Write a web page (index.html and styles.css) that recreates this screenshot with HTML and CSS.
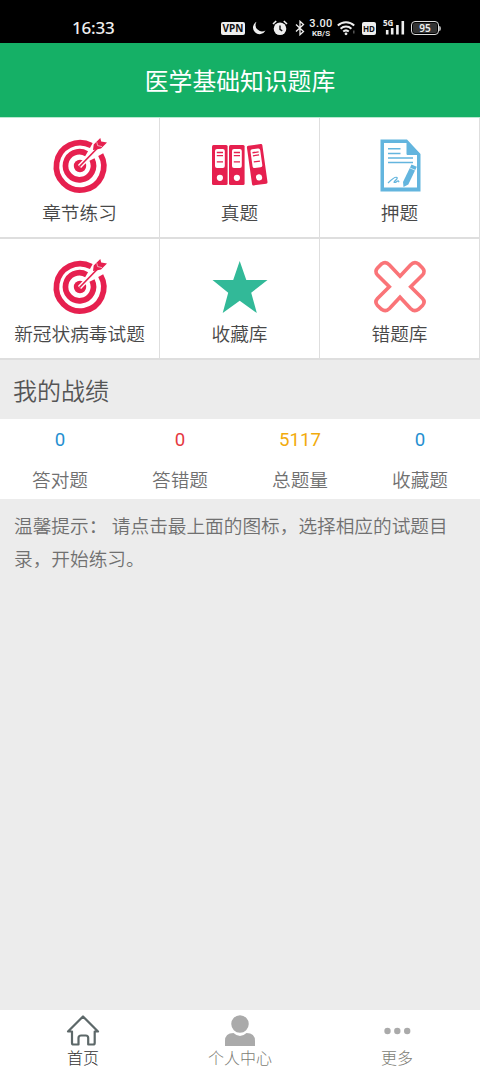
FILE: index.html
```
<!DOCTYPE html>
<html lang="zh-CN">
<head>
<meta charset="utf-8">
<title>医学基础知识题库</title>
<link rel="stylesheet" href="styles.css">
</head>
<body>
<div class="app">
  <div class="status">
    <span class="clock">16:33</span>
    <span class="vpn">VPN</span>
    <svg class="moon" width="14" height="14" viewBox="0 0 14 14"><path d="M4.500.7A6.600 6.600 0 1 0 13.500 9.500 6.500 6.500 0 0 1 4.500.7z" fill="#eee"/></svg>
    <svg class="alarm" width="16" height="16" viewBox="0 0 16 16"><circle cx="8" cy="8.800" r="6.300" fill="#eee"/><path d="M1 4 4.200 1M15 4l-3.200-3" stroke="#eee" stroke-width="1.600"/><path d="M8 5.500v3.800l2.200 1.500" fill="none" stroke="#111" stroke-width="1.400"/></svg>
    <svg class="bt" width="10" height="16" viewBox="0 0 10 16"><path d="M1 4.500 8.500 11.500 5 14.700V1.300L8.500 4.500 1 11.500" fill="none" stroke="#eee" stroke-width="1.300"/></svg>
    <span class="speed"><b>3.00</b><i>KB/S</i></span>
    <svg class="wifi" width="19" height="16" viewBox="0 0 19 16"><g fill="none" stroke="#eee" stroke-width="2"><path d="M.8 5.500a12 12 0 0 1 16.400 0M3.600 8.700a8 8 0 0 1 10.800 0M6.200 11.600a4.200 4.200 0 0 1 5.600 0"/></g><circle cx="9" cy="13.800" r="1.400" fill="#eee"/><path d="M16.800 10.500v3" stroke="#555" stroke-width="1.500"/></svg>
    <span class="hd">HD</span>
    <span class="signal"><i>5G</i><svg width="21" height="16" viewBox="0 0 21 16"><path d="M3.200 14.500V10M8.200 14.500V8M13.400 14.500V5M18.800 14.500V1" stroke="#eee" stroke-width="2.600"/></svg></span>
    <span class="battery"><b>95</b></span><span class="tip"></span>
  </div>
  <header class="title">医学基础知识题库</header>
  <main class="grid">
    <a class="cell">
      <svg class="icon" viewBox="50 136 60 60"><use href="#target"/></svg>
      <span>章节练习</span>
    </a>
    <a class="cell">
      <svg class="icon" viewBox="210 136 60 60">
        <defs><g id="binder"><rect width="15.600" height="40" rx="1.500" fill="#e6204f"/><rect x="3" y="4" width="9.800" height="19" rx="2" fill="#fff"/><path d="M4.800 7.500h6.200M4.800 10.600h6.200M4.800 16.800h6.200" stroke="#e6204f" stroke-width="1.300"/><circle cx="7.900" cy="32.800" r="3.100" fill="#fff"/></g></defs>
        <use href="#binder" x="212" y="145"/><use href="#binder" x="229" y="145"/><use href="#binder" transform="translate(246.700 146) rotate(-8)"/>
      </svg>
      <span>真题</span>
    </a>
    <a class="cell">
      <svg class="icon" viewBox="370 136 60 60">
        <path d="M380.500 139.500H407L420.500 154v37.500h-40zM384 143v44.500h33V155H407v-12z" fill="#63b5de" fill-rule="evenodd"/>
        <path d="M406.500 140v14.500H420z" fill="#63b5de"/>
        <path d="M388 148.700h12.500M388 153.500h12.500M388 158h25M388 162.500h25" stroke="#63b5de" stroke-width="1.500"/>
        <path d="M388 183c3-3 7-7 9-5.500 1.500 1.500-4.500 4.500-2.500 5 2 .2 3-2.500 4-1.500l.5 1.300" fill="none" stroke="#63b5de" stroke-width="1.200"/>
        <path d="M411.500 164.500 416.800 166.800 408.300 184.500 403.500 187 403 182z" fill="#63b5de"/><path d="m410 168 5.300 2.300" stroke="#fff" stroke-width=".7"/>
      </svg>
      <span>押题</span>
    </a>
    <a class="cell">
      <svg class="icon" viewBox="50 136 60 60">
        <defs><g id="target"><g fill="none" stroke="#e6204f" stroke-width="5.700"><path d="M91.300 145.500A23.700 23.700 0 1 0 100.700 154.700"/><path d="M86.600 153.700A14 14 0 1 0 92 159.500"/></g><circle cx="80" cy="166" r="6.200" fill="#e6204f"/><path d="M79.500 166.500 97 148.500" stroke="#fff" stroke-width="4.500"/><path d="M79.500 166.500 98 147.500" stroke="#e6204f" stroke-width="1.700"/><path d="M93 150 93.700 144.500 100.300 138 101.200 141.500 107 142.500 101 148.500 95 149.800z" fill="#e6204f"/><path d="m96.800 142.200.8 3.400 4.400 1" fill="none" stroke="#fff" stroke-width=".6"/></g></defs>
        <use href="#target"/>
      </svg>
      <span>新冠状病毒试题</span>
    </a>
    <a class="cell">
      <svg class="icon" viewBox="210 257 60 60"><path d="m239.700 261 6.600 19h21.200L251.200 292.700l5.600 20.300-17.100-12.300-17 12.300 5.500-20.300L212.500 280h20.700z" fill="#32b998"/></svg>
      <span>收藏库</span>
    </a>
    <a class="cell">
      <svg class="icon" viewBox="370 257 60 60"><path d="M400 276.200 410.500 265Q414.300 261 418.500 264L422.500 268Q425.700 271.500 422.500 275L410.700 286.700 422.500 298.500Q425.700 302 422.500 305.500L418.500 309.300Q414.300 312.300 410.500 308.500L400 297.200 389.500 308.500Q385.700 312.300 381.500 309.300L377.500 305.500Q374.300 302 377.500 298.500L389.300 286.700 377.500 275Q374.300 271.500 377.500 268L381.500 264Q385.700 261 389.500 265Z" fill="none" stroke="#fa7478" stroke-width="3.600"/></svg>
      <span>错题库</span>
    </a>
  </main>
  <h2 class="heading">我的战绩</h2>
  <section class="stats">
    <div><b class="blue">0</b><span>答对题</span></div>
    <div><b class="red">0</b><span>答错题</span></div>
    <div><b class="amber">5117</b><span>总题量</span></div>
    <div><b class="blue">0</b><span>收藏题</span></div>
  </section>
  <p class="hint">温馨提示： 请点击最上面的图标，选择相应的试题目录，开始练习。</p>
  <nav class="tabs">
    <a class="active"><svg width="34" height="34" viewBox="0 0 34 34"><g fill="none" stroke="#5d6869" stroke-width="2.200" stroke-linejoin="round"><path d="M2 17.500 17 2.500l15 15h-3.300V29q0 1.500-1.500 1.500h-5V24q0-2.500-2.500-2.500h-4.500Q12.500 21.500 12.500 24v6.500h-5Q6 30.500 6 29V17.500z"/></g></svg><span>首页</span></a>
    <a><svg width="34" height="34" viewBox="0 0 34 34"><path d="M2 32v-5q0-8 8.500-8 6.500 6 13 0Q32 19 32 27v5z" fill="#aaa"/><circle cx="17" cy="10" r="9.500" fill="#aaa" stroke="#fff" stroke-width="1.500"/></svg><span>个人中心</span></a>
    <a><svg width="34" height="34" viewBox="0 0 34 34"><g fill="#aaa"><circle cx="7.500" cy="17" r="3.200"/><circle cx="17.300" cy="17" r="3.200"/><circle cx="27.200" cy="17" r="3.200"/></g></svg><span>更多</span></a>
  </nav>
</div>
</body>
</html>
```
FILE: styles.css
```
* { box-sizing: border-box; }
body { margin: 0; font-family: Roboto, "Noto Sans CJK SC", sans-serif; font-weight: 300; background: #ececec; }
.app { display: flex; flex-direction: column; height: 1072px; width: 480px; }
.status { height: 43px; background: #000; color: #eee; display: flex; align-items: center; padding: 13px 0 0 72px; flex: none; }
.clock { font: 500 17px/30px "Noto Sans", sans-serif; width: 149px; letter-spacing: -.2px; }
.vpn { width: 24px; height: 13px; border-radius: 2px; background: #eee; color: #111; font: 700 10px/13px "Noto Sans", sans-serif; text-align: center; }
.moon { margin-left: 7px; }
.alarm { margin-left: 6px; }
.bt { margin-left: 7px; }
.speed { display: flex; flex-direction: column; align-items: center; margin-left: 3px; width: 26px; }
.speed b { font: 500 11px/11px Roboto, sans-serif; letter-spacing: .4px; }
.speed i { font: 600 8px/9px Roboto, sans-serif; }
.wifi { margin-left: 3px; }
.hd { width: 14px; height: 13px; margin-left: 6px; border-radius: 2px; background: #eee; color: #111; font: 700 8px/13px "Noto Sans", sans-serif; text-align: center; }
.signal { position: relative; width: 21px; height: 16px; margin-left: 8px; }
.signal svg { display: block; }
.signal i { position: absolute; left: -1px; top: -1px; font: 700 8px/8px "Noto Sans", sans-serif; background: #000; }
.battery { margin-left: 6px; width: 28px; height: 14px; border: 1.500px solid #ddd; border-radius: 4px; padding: 1px; }
.battery b { display: block; height: 10px; border-radius: 2px; background: #333; font: 600 10px/10px "Noto Sans", sans-serif; text-align: center; }
.tip { width: 2px; height: 5px; background: #aaa; border-radius: 0 2px 2px 0; }
.title { height: 75px; flex: none; background: #15b066; color: #fff; font-size: 23.800px; line-height: 79px; text-align: center; font-weight: 400; border-bottom: 1px solid #b9e8d0; }
.grid { display: grid; grid-template-columns: repeat(3, 160px); grid-auto-rows: 121px; flex: none; }
.cell { background: #fff; border: solid #dedede; border-width: 0 1px 2px 0; display: flex; flex-direction: column; align-items: center; padding-top: 18px; color: #484848; font-size: 18.670px; white-space: nowrap; font-weight: 350; }
.icon { width: 60px; height: 60px; flex: none; }
.cell span { line-height: 37px; }
.heading { margin: 0; padding-left: 13px; height: 59px; line-height: 65px; font-size: 24px; font-weight: 350; color: #555; flex: none; }
.stats { display: grid; grid-template-columns: repeat(4, 1fr); height: 80px; background: #fff; text-align: center; flex: none; }
.stats div { display: flex; flex-direction: column; color: #707070; font-size: 18.670px; font-weight: 350; }
.stats b { line-height: 43px; height: 42px; font-weight: 400; }
.stats span { line-height: 40px; }
.stats .blue { color: #2590d0; }
.stats .red { color: #e5393f; }
.stats .amber { color: #f2ab0c; }
.hint { margin: 0; padding: 12px 14px; line-height: 33px; font-size: 18.670px; font-weight: 350; color: #707070; flex: 1; }
.tabs { height: 62px; background: #fff; display: flex; justify-content: space-between; padding: 4px 37px 0 37px; flex: none; }
.tabs a { width: 92px; display: flex; flex-direction: column; align-items: center; color: #7c7c74; font-size: 16px; }
.tabs span { line-height: 22px; }
.tabs .active { color: #333; }
```
